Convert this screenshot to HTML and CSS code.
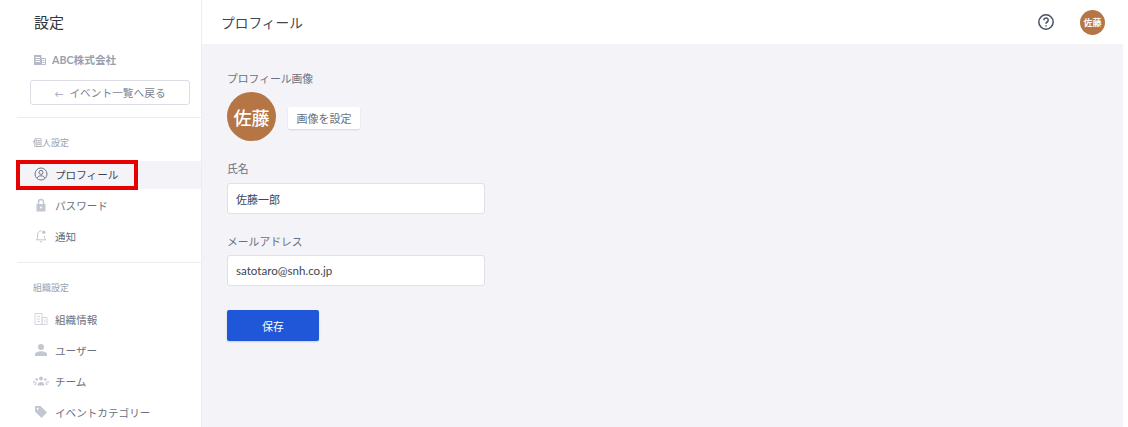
FILE: index.html
```html
<!DOCTYPE html>
<html lang="ja">
<head>
  <meta charset="UTF-8">
  <meta name="viewport" content="width=device-width, initial-scale=1.0">
  <title>プロフィール</title>
  <link rel="stylesheet" href="styles.css">
</head>
<body>

  <div class="app">

    <!-- Sidebar -->
    <aside class="sidebar">
      <div class="sidebar-head">
        <h1 class="sidebar-title">設定</h1>
        <div class="org-name">
          <svg class="org-icon" width="12" height="12" viewBox="0 0 12 12"><path fill="#b4b9c6" d="M0 1h7.500v10H0z"/><path fill="#fff" d="M1.500 3h4.500v1H1.500zM1.500 5h4.500v1H1.500zM1.500 7h4.500v1H1.500z"/><path fill="none" stroke="#b4b9c6" d="M7.500 4.500h4v6h-4z"/><path fill="#b4b9c6" d="M8.500 6h2v1h-2zM8.500 8h2v1h-2z"/></svg>
          <span>ABC株式会社</span>
        </div>
        <button class="back-button"><span class="back-arrow">←</span>イベント一覧へ戻る</button>
      </div>

      <section class="nav-group">
        <h2 class="nav-heading">個人設定</h2>
        <a class="nav-item active">
          <svg width="14" height="14" viewBox="0 0 14 14" fill="none" stroke="#6f7688" stroke-width="1"><circle cx="7" cy="7" r="6"/><circle cx="7" cy="5.400" r="2"/><path d="M3.300 10.800c.7-1.500 2.100-2 3.700-2s3 .5 3.700 2"/></svg>
          プロフィール
        </a>
        <a class="nav-item">
          <svg width="14" height="14" viewBox="0 0 14 14"><path fill="#c3c7d1" d="M2.500 6h9v7.500h-9z"/><path fill="none" stroke="#c3c7d1" stroke-width="1.400" d="M4.500 6V4a2.500 2.500 0 0 1 5 0v2"/><circle cx="7" cy="9.500" r="1" fill="#fff"/></svg>
          パスワード
        </a>
        <a class="nav-item">
          <svg width="14" height="14" viewBox="0 0 14 14" fill="none" stroke="#c3c7d1"><path d="M7.500 1.800C5 1.800 3.500 3.500 3.500 6v3.300L2 10.800h10l-1.500-1.500V7"/><path d="M5.800 12.800h2.400"/><circle cx="9.800" cy="3.200" r="1.700" fill="#c3c7d1" stroke="none"/></svg>
          通知
        </a>
      </section>

      <section class="nav-group">
        <h2 class="nav-heading">組織設定</h2>
        <a class="nav-item">
          <svg width="14" height="14" viewBox="0 0 14 14" fill="none" stroke="#d3d6de"><path d="M1 1.500h7v11H1zM8 5.500h5v7H8z"/><path d="M3 4.500h3M3 7h3M3 9.500h3M10 8h1.500M10 10h1.500"/></svg>
          組織情報
        </a>
        <a class="nav-item">
          <svg width="14" height="14" viewBox="0 0 14 14"><circle cx="7" cy="4" r="3" fill="#c3c7d1"/><path fill="#c3c7d1" d="M1 13v-1.500C1 9.500 4 8.300 7 8.300s6 1.200 6 3.200V13z"/></svg>
          ユーザー
        </a>
        <a class="nav-item team-item">
          <svg width="16" height="14" viewBox="0 0 16 14" fill="#c3c7d1"><circle cx="8" cy="4.500" r="2"/><circle cx="3.700" cy="5.500" r="1.300"/><circle cx="12.300" cy="5.500" r="1.300"/><circle cx="1" cy="8" r=".9"/><circle cx="15" cy="8" r=".9"/><path d="M4.500 11.500c0-2 1.500-3.500 3.500-3.500s3.500 1.500 3.500 3.500zM1.500 11c0-1.500.8-2.800 2.300-3-.5.900-.8 1.900-.8 3zM14.500 11c0-1.500-.8-2.800-2.300-3 .5.900.8 1.900.8 3z"/></svg>
          チーム
        </a>
        <a class="nav-item">
          <svg width="14" height="14" viewBox="0 0 14 14"><path fill="#c3c7d1" d="M1 1h5.500L13 7.500 7.500 13 1 6.500z"/><circle cx="3.700" cy="3.700" r="1" fill="#fff"/></svg>
          イベントカテゴリー
        </a>
      </section>

      <!-- Red highlight around the current item -->
      <div class="highlight"></div>
    </aside>

    <!-- Main area -->
    <div class="main">
      <header class="topbar">
        <div class="topbar-title">プロフィール</div>
        <div class="topbar-actions">
          <svg width="18" height="18" viewBox="0 0 18 18" fill="none" stroke="#465166" stroke-width="1.500"><circle cx="9" cy="9" r="7.200"/><path d="M6.800 7.200a2.200 2.200 0 1 1 3.400 1.800c-.8.500-1.200 1-1.200 1.800"/><path d="M9 12.200v1.300"/></svg>
          <div class="avatar-small">佐藤</div>
        </div>
      </header>

      <main class="content">
        <div class="field-label">プロフィール画像</div>
        <div class="avatar-row">
          <div class="avatar-large">佐藤</div>
          <button class="image-button">画像を設定</button>
        </div>

        <label class="field-label">氏名</label>
        <input class="text-input name-input" type="text" value="佐藤一郎">

        <label class="field-label">メールアドレス</label>
        <input class="text-input email-input" type="text" value="satotaro@snh.co.jp">

        <button class="save-button">保存</button>
      </main>
    </div>

  </div>

</body>
</html>
```

FILE: styles.css
```css
/* General page style */
body {
  margin: 0;
  font-family: 'Lato', 'Noto Sans CJK JP', sans-serif;
  color: #3f4654;
  background-color: #fff;
  height: 427px;
  overflow: hidden;
}

.app {
  display: flex;
  height: 427px;
  width: 1123px;
}

/* Sidebar */
.sidebar {
  position: relative;
  width: 201px;
  flex-shrink: 0;
  padding-left: 17px;
  box-sizing: border-box;
  background-color: #fff;
}

.sidebar-head {
  padding: 11px 0 12px 13px;
  height: 94px;
  border-bottom: 1px solid #ececf3;
}

.sidebar-title {
  margin: 0 0 0 4px;
  font-size: 15px;
  font-weight: 400;
  line-height: 22px;
  color: #2f3542;
}

.org-name {
  display: flex;
  align-items: center;
  gap: 6px;
  margin: 19px 0 0 4px;
  font-size: 10.7px;
  font-weight: 700;
  line-height: 16px;
  color: #9a9fae;
}

.back-button {
  display: block;
  width: 160px;
  height: 25px;
  margin-top: 12px;
  padding: 0;
  font-family: inherit;
  font-size: 10.7px;
  color: #7b8293;
  background-color: #fff;
  border: 1px solid #dcdde5;
  border-radius: 3px;
}

.back-arrow {
  margin-right: 6px;
  font-size: 9px;
  color: #9a9fae;
}

.nav-group {
  padding-top: 18px;
  padding-bottom: 8px;
}

.nav-group + .nav-group {
  border-top: 1px solid #ececf3;
}

.nav-heading {
  margin: 0 0 11px 16px;
  font-size: 9px;
  font-weight: 400;
  line-height: 14px;
  color: #9a9fae;
}

.nav-item {
  display: flex;
  align-items: center;
  gap: 7px;
  height: 28px;
  margin-bottom: 3px;
  padding-left: 17px;
  padding-bottom: 2px;
  box-sizing: border-box;
  font-size: 10.6px;
  color: #6a7180;
}

.nav-item svg {
  flex-shrink: 0;
}

.team-item {
  gap: 6px;
  padding-left: 16px;
}

.nav-item.active {
  color: #3f4654;
  background-color: #f3f3f8;
}

.highlight {
  position: absolute;
  left: 16px;
  top: 160px;
  width: 122px;
  height: 30px;
  box-sizing: border-box;
  border: 4px solid #e60000;
}

/* Main area */
.main {
  flex: 1;
  background-color: #f3f3f8;
  border-left: 1px solid #ececf3;
}

.topbar {
  display: flex;
  justify-content: space-between;
  align-items: center;
  height: 44px;
  padding: 0 18px 0 19px;
  background-color: #fff;
}

.topbar-title {
  font-size: 13.7px;
  color: #3f4654;
}

.topbar-actions {
  display: flex;
  align-items: center;
  gap: 25px;
}

.avatar-small {
  display: flex;
  justify-content: center;
  align-items: center;
  width: 25px;
  height: 25px;
  font-size: 9px;
  font-weight: 700;
  color: #fff;
  background-color: #b57545;
  border-radius: 50%;
}

.content {
  display: flex;
  flex-direction: column;
  align-items: flex-start;
  padding: 27px 0 0 25px;
}

.field-label {
  font-size: 10.8px;
  line-height: 16px;
  color: #6a7180;
}

.avatar-row {
  display: flex;
  align-items: center;
  gap: 12px;
  margin: 5px 0 20px;
}

.avatar-large {
  display: flex;
  justify-content: center;
  align-items: center;
  width: 49px;
  height: 49px;
  font-size: 18px;
  font-weight: 500;
  color: #fff;
  background-color: #b57545;
  border-radius: 50%;
}

.image-button {
  width: 72px;
  height: 22px;
  margin-top: 3px;
  padding: 0;
  font-family: inherit;
  font-size: 11px;
  color: #6a7180;
  background-color: #fff;
  border: none;
  border-radius: 2px;
  box-shadow: 0 1px 2px rgba(0, 0, 0, 0.12);
}

.text-input {
  width: 258px;
  height: 31px;
  margin: 6px 0 0 0;
  padding: 0 8px;
  box-sizing: border-box;
  font-family: inherit;
  font-size: 11px;
  color: #3f4654;
  background-color: #fff;
  border: 1px solid #dfe0e8;
  border-radius: 3px;
}

.name-input {
  margin-bottom: 20px;
}

.email-input {
  margin-top: 5px;
  font-size: 11.6px;
}

.save-button {
  width: 92px;
  height: 31px;
  margin-top: 24px;
  padding: 0;
  font-family: inherit;
  font-size: 10.8px;
  color: #fff;
  background-color: #1f57d8;
  border: none;
  border-radius: 2px;
  box-shadow: 0 1px 2px rgba(0, 0, 0, 0.15);
}
```
